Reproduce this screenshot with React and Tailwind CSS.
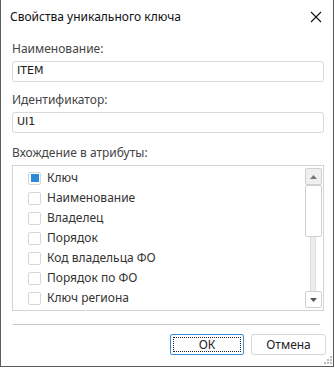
import React from 'react'

const attrs = [
  { name: 'Ключ', checked: true },
  { name: 'Наименование', checked: false },
  { name: 'Владелец', checked: false },
  { name: 'Порядок', checked: false },
  { name: 'Код владельца ФО', checked: false },
  { name: 'Порядок по ФО', checked: false },
  { name: 'Ключ региона', checked: false },
]

export default function App() {
  return (
    <div className="w-[335px] h-[368px] bg-white font-['Noto_Sans',sans-serif] text-[12px]">
      <div className="w-[334px] h-[367px] border-x border-b border-[#5c5c5c] flex flex-col">
        <div className="h-[34px] flex items-center justify-between pl-[9px] pr-[10px]">
          <span className="text-[#111] text-[12px]">Свойства уникального ключа</span>
          <svg width="12" height="12" viewBox="0 0 12 12" className="mr-[1px]">
            <path d="M1 1 L11 11 M11 1 L1 11" stroke="#111" strokeWidth="1.1" />
          </svg>
        </div>

        <div className="flex flex-col pl-[11px] pr-[10px] text-[#444]">
          <label className="h-[22px] leading-[22px] mt-[4px]">Наименование:</label>
          <Field value="ITEM" />
          <label className="h-[22px] leading-[22px] mt-[7px]">Идентификатор:</label>
          <Field value="UI1" />
          <label className="h-[22px] leading-[22px] mt-[9px]">Вхождение в атрибуты:</label>

          <div className="w-[312px] h-[146px] border border-[#d4d4d4] flex mt-[1px]">
            <ul className="flex-1 flex flex-col pt-[2px] pl-[15px]">
              {attrs.map((a) => (
                <li key={a.name} className="h-[20px] flex items-center gap-[6px]">
                  <span className="w-[13px] h-[13px] border border-[#d6d6d6] rounded-[2px] bg-white flex items-center justify-center">
                    {a.checked && <span className="w-[8px] h-[8px] bg-[#2a8ad8]" />}
                  </span>
                  <span className="text-[#333]">{a.name}</span>
                </li>
              ))}
            </ul>
            <div className="w-[18px] flex flex-col items-center py-[2px] mr-[1px]">
              <div className="w-[17px] h-[17px] border border-[#d0d0d0] rounded-[2px] bg-[#efefef] flex items-center justify-center">
                <svg width="7" height="4" viewBox="0 0 7 4"><path d="M3.5 0 L7 4 L0 4 Z" fill="#777" /></svg>
              </div>
              <div className="w-[17px] h-[52px] border border-[#d0d0d0] rounded-[2px] bg-white" />
              <div className="w-[6px] flex-1 bg-[#ececec] border-x border-[#dcdcdc]" />
              <div className="w-[17px] h-[17px] border border-[#d0d0d0] rounded-[2px] bg-white flex items-center justify-center">
                <svg width="7" height="4" viewBox="0 0 7 4"><path d="M0 0 L7 0 L3.5 4 Z" fill="#555" /></svg>
              </div>
            </div>
          </div>

          <div className="h-px bg-[#c8c8c8] mt-[13px] mr-[3px] ml-[1px]" />

          <div className="flex justify-end gap-[7px] mt-[9px] mr-[-3px]">
            <button className="w-[74px] h-[21px] border border-[#3c8fd6] rounded-[2px] p-[2px] text-[#222]">
              <span className="w-full h-full border border-dotted border-[#222] flex items-center justify-center">ОК</span>
            </button>
            <button className="w-[75px] h-[21px] border border-[#d6d6d6] rounded-[3px] text-[#222] flex items-center justify-center">
              Отмена
            </button>
          </div>
        </div>
        <div className="flex-1 flex items-end justify-end pr-[1px] pb-[1px]">
          <svg width="10" height="10" viewBox="0 0 10 10">
            {[[8, 0], [8, 3], [5, 3], [8, 6], [5, 6], [2, 6]].map(([x, y]) => (
              <rect key={x + '-' + y} x={x} y={y + 1} width="2" height="2" fill="#bdbdbd" />
            ))}
          </svg>
        </div>
      </div>
    </div>
  )
}

function Field({ value }) {
  return (
    <div className="w-[312px] h-[21px] border border-[#d9d9d9] rounded-[3px] flex items-center pl-[4px] mt-[1px] text-[#222] font-['DejaVu_Sans',sans-serif] text-[11px]">
      {value}
    </div>
  )
}
